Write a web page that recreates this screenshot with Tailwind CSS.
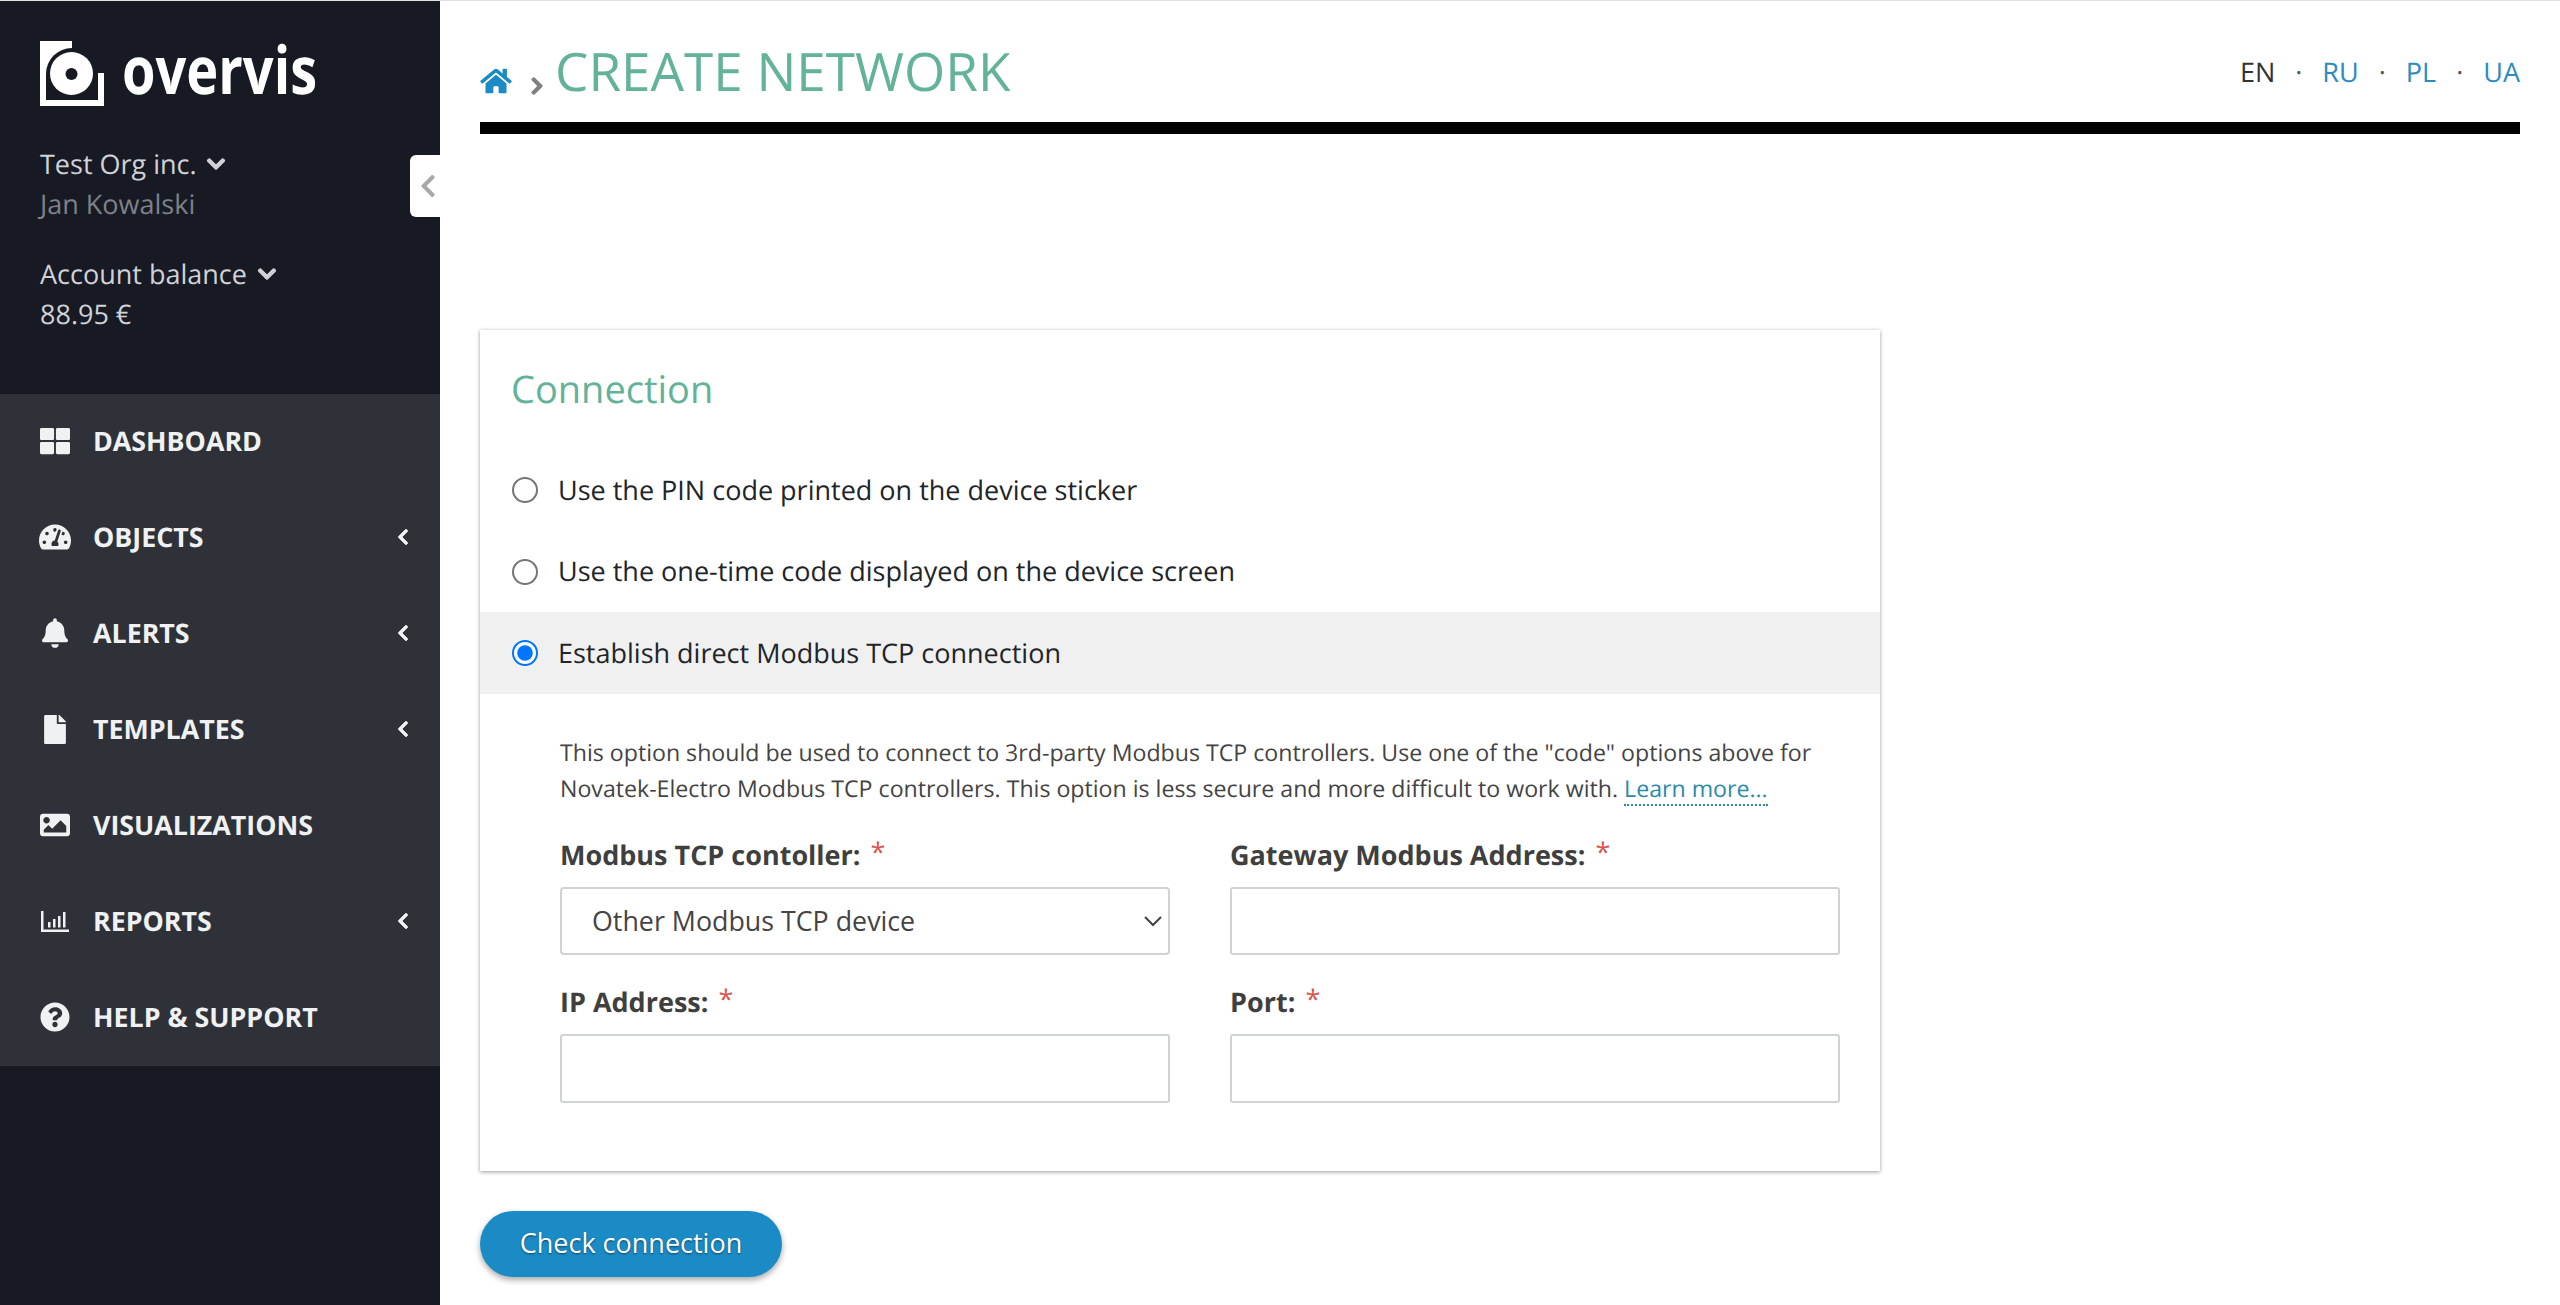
<!DOCTYPE html>
<html lang="en">
<head>
<meta charset="utf-8">
<title>Create network</title>
<script src="https://cdn.jsdelivr.net/npm/@tailwindcss/browser@4"></script>
</head>
<body class="h-[1305px] overflow-hidden bg-white font-['Open_Sans',sans-serif] text-[#212529] [text-rendering:geometricPrecision]">
<div class="h-px bg-[#e2e2e2]"></div>
<div class="flex h-[1304px]">
  <aside class="relative w-[440px] shrink-0 bg-[#171a23]">
    <div class="flex h-[143px] items-start pl-[40px] pt-[40px]">
      <svg class="w-[64px] h-[65px] shrink-0" viewBox="0 0 64 65">
        <rect width="64" height="65" fill="#fff"/>
        <rect x="32" width="32" height="32" fill="#171a23"/>
        <circle cx="32" cy="33" r="26" fill="#171a23"/>
        <rect x="6" y="33" width="52" height="26" fill="#171a23"/>
        <circle cx="31.5" cy="32.5" r="21.5" fill="#fff"/>
        <circle cx="31.5" cy="33" r="6" fill="#171a23"/>
      </svg>
      <span class="ml-[18px] -mt-[16px] block origin-left scale-x-[.82] text-[66px] leading-[88px] font-bold text-white">overvis</span>
    </div>
    <div class="pl-[40px] text-[27px] leading-[40px] text-[#d0d2d8]">
      <div class="flex items-center">Test Org inc.<svg class="ml-[9px] w-[20px] h-[20px] fill-current stroke-current stroke-[30]" viewBox="0 0 448 512"><path d="M207.029 381.476L12.686 187.132c-9.373-9.373-9.373-24.569 0-33.941l22.667-22.667c9.357-9.357 24.522-9.375 33.901-.04L224 284.505l154.745-154.021c9.379-9.335 24.544-9.317 33.901.04l22.667 22.667c9.373 9.373 9.373 24.569 0 33.941L240.971 381.476c-9.373 9.372-24.569 9.372-33.942 0z"/></svg></div>
      <div class="text-[#7e8189]">Jan Kowalski</div>
      <div class="mt-[30px] flex items-center">Account balance<svg class="ml-[10px] w-[20px] h-[20px] fill-current stroke-current stroke-[30]" viewBox="0 0 448 512"><path d="M207.029 381.476L12.686 187.132c-9.373-9.373-9.373-24.569 0-33.941l22.667-22.667c9.357-9.357 24.522-9.375 33.901-.04L224 284.505l154.745-154.021c9.379-9.335 24.544-9.317 33.901.04l22.667 22.667c9.373 9.373 9.373 24.569 0 33.941L240.971 381.476c-9.373 9.372-24.569 9.372-33.942 0z"/></svg></div>
      <div>88.95 €</div>
    </div>
    <div class="absolute right-0 top-[154px] flex h-[62px] w-[30px] items-center justify-end rounded-l-[6px] bg-white pr-[2px] text-[#a8a8a8]">
      <svg class="w-[20px] h-[26px] fill-current" viewBox="0 0 320 512"><path d="M34.52 239.03L228.87 44.69c9.37-9.37 24.57-9.37 33.94 0l22.67 22.67c9.36 9.36 9.37 24.52.04 33.9L131.49 256l154.02 154.75c9.34 9.38 9.32 24.54-.04 33.9l-22.67 22.67c-9.37 9.37-24.57 9.37-33.94 0L34.52 272.97c-9.37-9.37-9.37-24.57 0-33.94z"/></svg>
    </div>
    <nav class="mt-[60px] bg-[#2f3138] text-[26.8px] font-bold text-[#f0f1f3]">
      <div class="flex h-[96px] items-center pl-[40px] pr-[30px] pb-[2px]">
        <span class="flex w-[30px] justify-center"><svg class="w-[30px] h-[30px] fill-current" viewBox="0 0 512 512"><path d="M296 32h192c13.255 0 24 10.745 24 24v160c0 13.255-10.745 24-24 24H296c-13.255 0-24-10.745-24-24V56c0-13.255 10.745-24 24-24zm-80 0H24C10.745 32 0 42.745 0 56v160c0 13.255 10.745 24 24 24h192c13.255 0 24-10.745 24-24V56c0-13.255-10.745-24-24-24zM0 296v160c0 13.255 10.745 24 24 24h192c13.255 0 24-10.745 24-24V296c0-13.255-10.745-24-24-24H24c-13.255 0-24 10.745-24 24zm296 184h192c13.255 0 24-10.745 24-24V296c0-13.255-10.745-24-24-24H296c-13.255 0-24 10.745-24 24v160c0 13.255 10.745 24 24 24z"/></svg></span>
        <span class="ml-[23px]">DASHBOARD</span>
      </div>
      <div class="flex h-[96px] items-center pl-[40px] pr-[30px] pb-[2px]">
        <span class="flex w-[30px] justify-center"><svg class="w-[32px] h-[30px] shrink-0 fill-current" viewBox="0 0 576 512"><path d="M288 32C128.94 32 0 160.94 0 320c0 52.8 14.25 102.26 39.06 144.8 5.61 9.62 16.3 15.2 27.44 15.2h443c11.14 0 21.83-5.58 27.44-15.2C561.75 422.26 576 372.8 576 320c0-159.06-128.94-288-288-288zm0 64c14.71 0 26.58 10.13 30.32 23.65-1.11 2.26-2.64 4.23-3.45 6.67l-9.22 27.67c-5.13 3.49-10.97 6.01-17.64 6.01-17.67 0-32-14.33-32-32S270.33 96 288 96zM96 384c-17.67 0-32-14.33-32-32s14.33-32 32-32 32 14.33 32 32-14.33 32-32 32zm48-160c-17.67 0-32-14.33-32-32s14.33-32 32-32 32 14.33 32 32-14.33 32-32 32zm246.77-72.41l-61.33 184C343.13 347.33 352 364.54 352 384c0 11.72-3.38 22.55-8.88 32H232.88c-5.5-9.45-8.88-20.28-8.88-32 0-33.94 26.5-61.43 59.9-63.59l61.34-184.01c4.17-12.56 17.73-19.45 30.36-15.17 12.57 4.19 19.35 17.79 15.17 30.36zm14.66 57.2l15.52-46.55c3.47-1.29 7.13-2.23 11.05-2.23 17.67 0 32 14.33 32 32s-14.33 32-32 32c-11.38-.01-20.89-6.28-26.57-15.22zM480 384c-17.67 0-32-14.33-32-32s14.33-32 32-32 32 14.33 32 32-14.33 32-32 32z"/></svg></span>
        <span class="ml-[23px]">OBJECTS</span>
        <svg class="ml-auto w-[14px] h-[18px] fill-current stroke-current stroke-[24]" viewBox="0 0 320 512"><path d="M34.52 239.03L228.87 44.69c9.37-9.37 24.57-9.37 33.94 0l22.67 22.67c9.36 9.36 9.37 24.52.04 33.9L131.49 256l154.02 154.75c9.34 9.38 9.32 24.54-.04 33.9l-22.67 22.67c-9.37 9.37-24.57 9.37-33.94 0L34.52 272.97c-9.37-9.37-9.37-24.57 0-33.94z"/></svg>
      </div>
      <div class="flex h-[96px] items-center pl-[40px] pr-[30px] pb-[2px]">
        <span class="flex w-[30px] justify-center"><svg class="w-[26px] h-[30px] fill-current" viewBox="0 0 448 512"><path d="M224 512c35.32 0 63.97-28.65 63.97-64H160.03c0 35.35 28.65 64 63.97 64zm215.39-149.71c-19.32-20.76-55.47-51.99-55.47-154.29 0-77.7-54.48-139.9-127.94-155.16V32c0-17.67-14.32-32-31.98-32s-31.98 14.33-31.98 32v20.84C118.56 68.1 64.08 130.3 64.08 208c0 102.3-36.15 133.53-55.47 154.29-6 6.45-8.66 14.16-8.61 21.71.11 16.4 12.98 32 32.1 32h383.8c19.12 0 32-15.6 32.1-32 .05-7.55-2.61-15.27-8.61-21.71z"/></svg></span>
        <span class="ml-[23px]">ALERTS</span>
        <svg class="ml-auto w-[14px] h-[18px] fill-current stroke-current stroke-[24]" viewBox="0 0 320 512"><path d="M34.52 239.03L228.87 44.69c9.37-9.37 24.57-9.37 33.94 0l22.67 22.67c9.36 9.36 9.37 24.52.04 33.9L131.49 256l154.02 154.75c9.34 9.38 9.32 24.54-.04 33.9l-22.67 22.67c-9.37 9.37-24.57 9.37-33.94 0L34.52 272.97c-9.37-9.37-9.37-24.57 0-33.94z"/></svg>
      </div>
      <div class="flex h-[96px] items-center pl-[40px] pr-[30px] pb-[2px]">
        <span class="flex w-[30px] justify-center"><svg class="w-[22px] h-[29px] fill-current" viewBox="0 0 384 512"><path d="M224 136V0H24C10.7 0 0 10.7 0 24v464c0 13.3 10.7 24 24 24h336c13.3 0 24-10.7 24-24V160H248c-13.2 0-24-10.8-24-24zm160-14.1v6.1H256V0h6.1c6.4 0 12.5 2.5 17 7l97.9 98c4.5 4.5 7 10.6 7 16.9z"/></svg></span>
        <span class="ml-[23px]">TEMPLATES</span>
        <svg class="ml-auto w-[14px] h-[18px] fill-current stroke-current stroke-[24]" viewBox="0 0 320 512"><path d="M34.52 239.03L228.87 44.69c9.37-9.37 24.57-9.37 33.94 0l22.67 22.67c9.36 9.36 9.37 24.52.04 33.9L131.49 256l154.02 154.75c9.34 9.38 9.32 24.54-.04 33.9l-22.67 22.67c-9.37 9.37-24.57 9.37-33.94 0L34.52 272.97c-9.37-9.37-9.37-24.57 0-33.94z"/></svg>
      </div>
      <div class="flex h-[96px] items-center pl-[40px] pr-[30px] pb-[2px]">
        <span class="flex w-[30px] justify-center"><svg class="w-[30px] h-[30px] fill-current" viewBox="0 0 512 512"><path d="M464 448H48c-26.51 0-48-21.49-48-48V112c0-26.51 21.49-48 48-48h416c26.51 0 48 21.49 48 48v288c0 26.51-21.49 48-48 48zM112 120c-30.928 0-56 25.072-56 56s25.072 56 56 56 56-25.072 56-56-25.072-56-56-56zM64 384h384V272l-87.515-87.515c-4.686-4.686-12.284-4.686-16.971 0L208 320l-55.515-55.515c-4.686-4.686-12.284-4.686-16.971 0L64 336v48z"/></svg></span>
        <span class="ml-[23px]">VISUALIZATIONS</span>
      </div>
      <div class="flex h-[96px] items-center pl-[40px] pr-[30px] pb-[2px]">
        <span class="flex w-[30px] justify-center"><svg class="w-[28px] h-[21px] fill-current" viewBox="0 0 28 21"><path d="M0 0h2.5v18.5H28V21H0zM7 11h2.5v5.5H7zM12 8h2.5v8.5H12zM17 5h2.5v11.5H17zM22 1h2.5v15.5H22z"/></svg></span>
        <span class="ml-[23px]">REPORTS</span>
        <svg class="ml-auto w-[14px] h-[18px] fill-current stroke-current stroke-[24]" viewBox="0 0 320 512"><path d="M34.52 239.03L228.87 44.69c9.37-9.37 24.57-9.37 33.94 0l22.67 22.67c9.36 9.36 9.37 24.52.04 33.9L131.49 256l154.02 154.75c9.34 9.38 9.32 24.54-.04 33.9l-22.67 22.67c-9.37 9.37-24.57 9.37-33.94 0L34.52 272.97c-9.37-9.37-9.37-24.57 0-33.94z"/></svg>
      </div>
      <div class="flex h-[96px] items-center pl-[40px] pr-[30px] pb-[2px]">
        <span class="flex w-[30px] justify-center"><svg class="w-[30px] h-[30px] fill-current" viewBox="0 0 512 512"><path d="M504 256c0 136.997-111.043 248-248 248S8 392.997 8 256C8 119.083 119.043 8 256 8s248 111.083 248 248zM262.655 90c-54.497 0-89.255 22.957-116.549 63.758-3.536 5.286-2.353 12.415 2.715 16.258l34.699 26.31c5.205 3.947 12.621 3.008 16.665-2.122 17.864-22.658 30.113-35.797 57.303-35.797 20.429 0 45.698 13.148 45.698 32.958 0 14.976-12.363 22.667-32.534 33.976C247.128 238.528 216 254.941 216 296v4c0 6.627 5.373 12 12 12h56c6.627 0 12-5.373 12-12v-1.333c0-28.462 83.186-29.647 83.186-106.667 0-58.002-60.165-102-116.531-102zM256 338c-25.365 0-46 20.635-46 46 0 25.364 20.635 46 46 46s46-20.636 46-46c0-25.365-20.635-46-46-46z"/></svg></span>
        <span class="ml-[23px]">HELP &amp; SUPPORT</span>
      </div>
    </nav>
  </aside>
  <main class="flex-1 px-[40px]">
    <header class="flex h-[133px] items-start justify-between border-b-[12px] border-black">
      <div class="flex items-start pt-[34px]">
        <svg class="mt-[32px] w-[32px] h-[28px] fill-[#1b8bc6]" viewBox="0 0 576 512"><path d="M280.37 148.26L96 300.11V464a16 16 0 0 0 16 16l112.06-.29a16 16 0 0 0 15.92-16V368a16 16 0 0 1 16-16h64a16 16 0 0 1 16 16v95.64a16 16 0 0 0 16 16.05L464 480a16 16 0 0 0 16-16V300L295.67 148.26a12.19 12.19 0 0 0-15.3 0zM571.6 251.47L488 182.56V44.05a12 12 0 0 0-12-12h-56a12 12 0 0 0-12 12v72.61L318.47 43a48 48 0 0 0-61 0L4.34 251.47a12 12 0 0 0-1.6 16.9l25.5 31A12 12 0 0 0 45.15 301l235.22-193.74a12.19 12.19 0 0 1 15.3 0L530.9 301a12 12 0 0 0 16.9-1.6l25.5-31a12 12 0 0 0-1.7-16.93z"/></svg>
        <svg class="ml-[19px] mt-[41px] w-[12px] h-[20px] fill-[#7f7f7f] stroke-[#7f7f7f] stroke-[30]" viewBox="0 0 320 512"><path d="M285.476 272.971L91.132 467.314c-9.373 9.373-24.569 9.373-33.941 0l-22.667-22.667c-9.357-9.357-9.375-24.522-.04-33.901L188.505 256 34.484 101.255c-9.335-9.379-9.317-24.544.04-33.901l22.667-22.667c9.373-9.373 24.569-9.373 33.941 0L285.475 239.03c9.373 9.372 9.373 24.568.001 33.941z"/></svg>
        <h1 class="ml-[12px] text-[53px] leading-[72px] font-normal text-[#63b29a]">CREATE NETWORK</h1>
      </div>
      <div class="flex pt-[52px] text-[27px] leading-[38px] text-[#333]">
        <span>EN</span><span class="mx-[20px] text-[#555]">·</span>
        <span class="text-[#2b8cc0]">RU</span><span class="mx-[20px] text-[#555]">·</span>
        <span class="text-[#2b8cc0]">PL</span><span class="mx-[20px] text-[#555]">·</span>
        <span class="text-[#2b8cc0]">UA</span>
      </div>
    </header>
    <section class="mt-[196px] w-[1400px] bg-white shadow-[0_1px_4px_rgba(0,0,0,0.4)]">
      <h2 class="pl-[31px] pt-[35px] pb-[36px] text-[38px] leading-[48px] font-normal text-[#63b29a]">Connection</h2>
      <label class="flex h-[82px] items-center pl-[32px]"><input type="radio" name="conn" class="m-0 w-[13px] h-[13px] [zoom:2]"><span class="ml-[20px] text-[27px]">Use the PIN code printed on the device sticker</span></label>
      <label class="flex h-[81px] items-center pl-[32px]"><input type="radio" name="conn" class="m-0 w-[13px] h-[13px] [zoom:2]"><span class="ml-[20px] text-[27px]">Use the one-time code displayed on the device screen</span></label>
      <label class="flex h-[82px] items-center bg-[#f0f0f0] pl-[32px]"><input type="radio" name="conn" checked class="m-0 w-[13px] h-[13px] [zoom:2]"><span class="ml-[20px] text-[27px]">Establish direct Modbus TCP connection</span></label>
      <div class="pl-[80px] pr-[40px] pt-[40px] pb-[68px]">
        <p class="text-[23.15px] leading-[36px] text-[#444]">This option should be used to connect to 3rd-party Modbus TCP controllers. Use one of the "code" options above for Novatek-Electro Modbus TCP controllers. This option is less secure and more difficult to work with. <a class="border-b-2 border-dotted border-[#2a8aa8] text-[#2a8aa8]">Learn more...</a></p>
        <div class="mt-[31px] grid grid-cols-[610px_610px] gap-x-[60px] gap-y-[29px]">
          <div>
            <div class="text-[27px] leading-[36px] font-bold text-[#3f3f3f]">Modbus TCP contoller: <span class="relative -top-[3px] ml-[3px] font-normal text-[#d9534f]">*</span></div>
            <select class="mt-[7px] h-[34px] w-[305px] rounded-[2px] border border-[#cfd3d6] bg-white pl-[11px] pr-[1px] pb-[1px] text-[13.4px] text-[#444] [zoom:2]"><option>Other Modbus TCP device</option></select>
          </div>
          <div>
            <div class="text-[27px] leading-[36px] font-bold text-[#3f3f3f]">Gateway Modbus Address: <span class="relative -top-[3px] ml-[3px] font-normal text-[#d9534f]">*</span></div>
            <input type="text" class="mt-[14px] h-[68px] w-full rounded-[3px] border-2 border-[#cfd3d6] bg-white">
          </div>
          <div>
            <div class="text-[27px] leading-[36px] font-bold text-[#3f3f3f]">IP Address: <span class="relative -top-[3px] ml-[3px] font-normal text-[#d9534f]">*</span></div>
            <input type="text" class="mt-[14px] h-[69px] w-full rounded-[3px] border-2 border-[#cfd3d6] bg-white">
          </div>
          <div>
            <div class="text-[27px] leading-[36px] font-bold text-[#3f3f3f]">Port: <span class="relative -top-[3px] ml-[3px] font-normal text-[#d9534f]">*</span></div>
            <input type="text" class="mt-[14px] h-[69px] w-full rounded-[3px] border-2 border-[#cfd3d6] bg-white">
          </div>
        </div>
      </div>
    </section>
    <button class="mt-[40px] h-[66px] w-[302px] rounded-full bg-[#1b8bc6] pb-[2px] text-[27px] text-white shadow-[0_3px_6px_rgba(0,0,0,0.35)] [text-shadow:0_1px_2px_rgba(0,0,0,0.5)]">Check connection</button>
  </main>
</div>
</body>
</html>
